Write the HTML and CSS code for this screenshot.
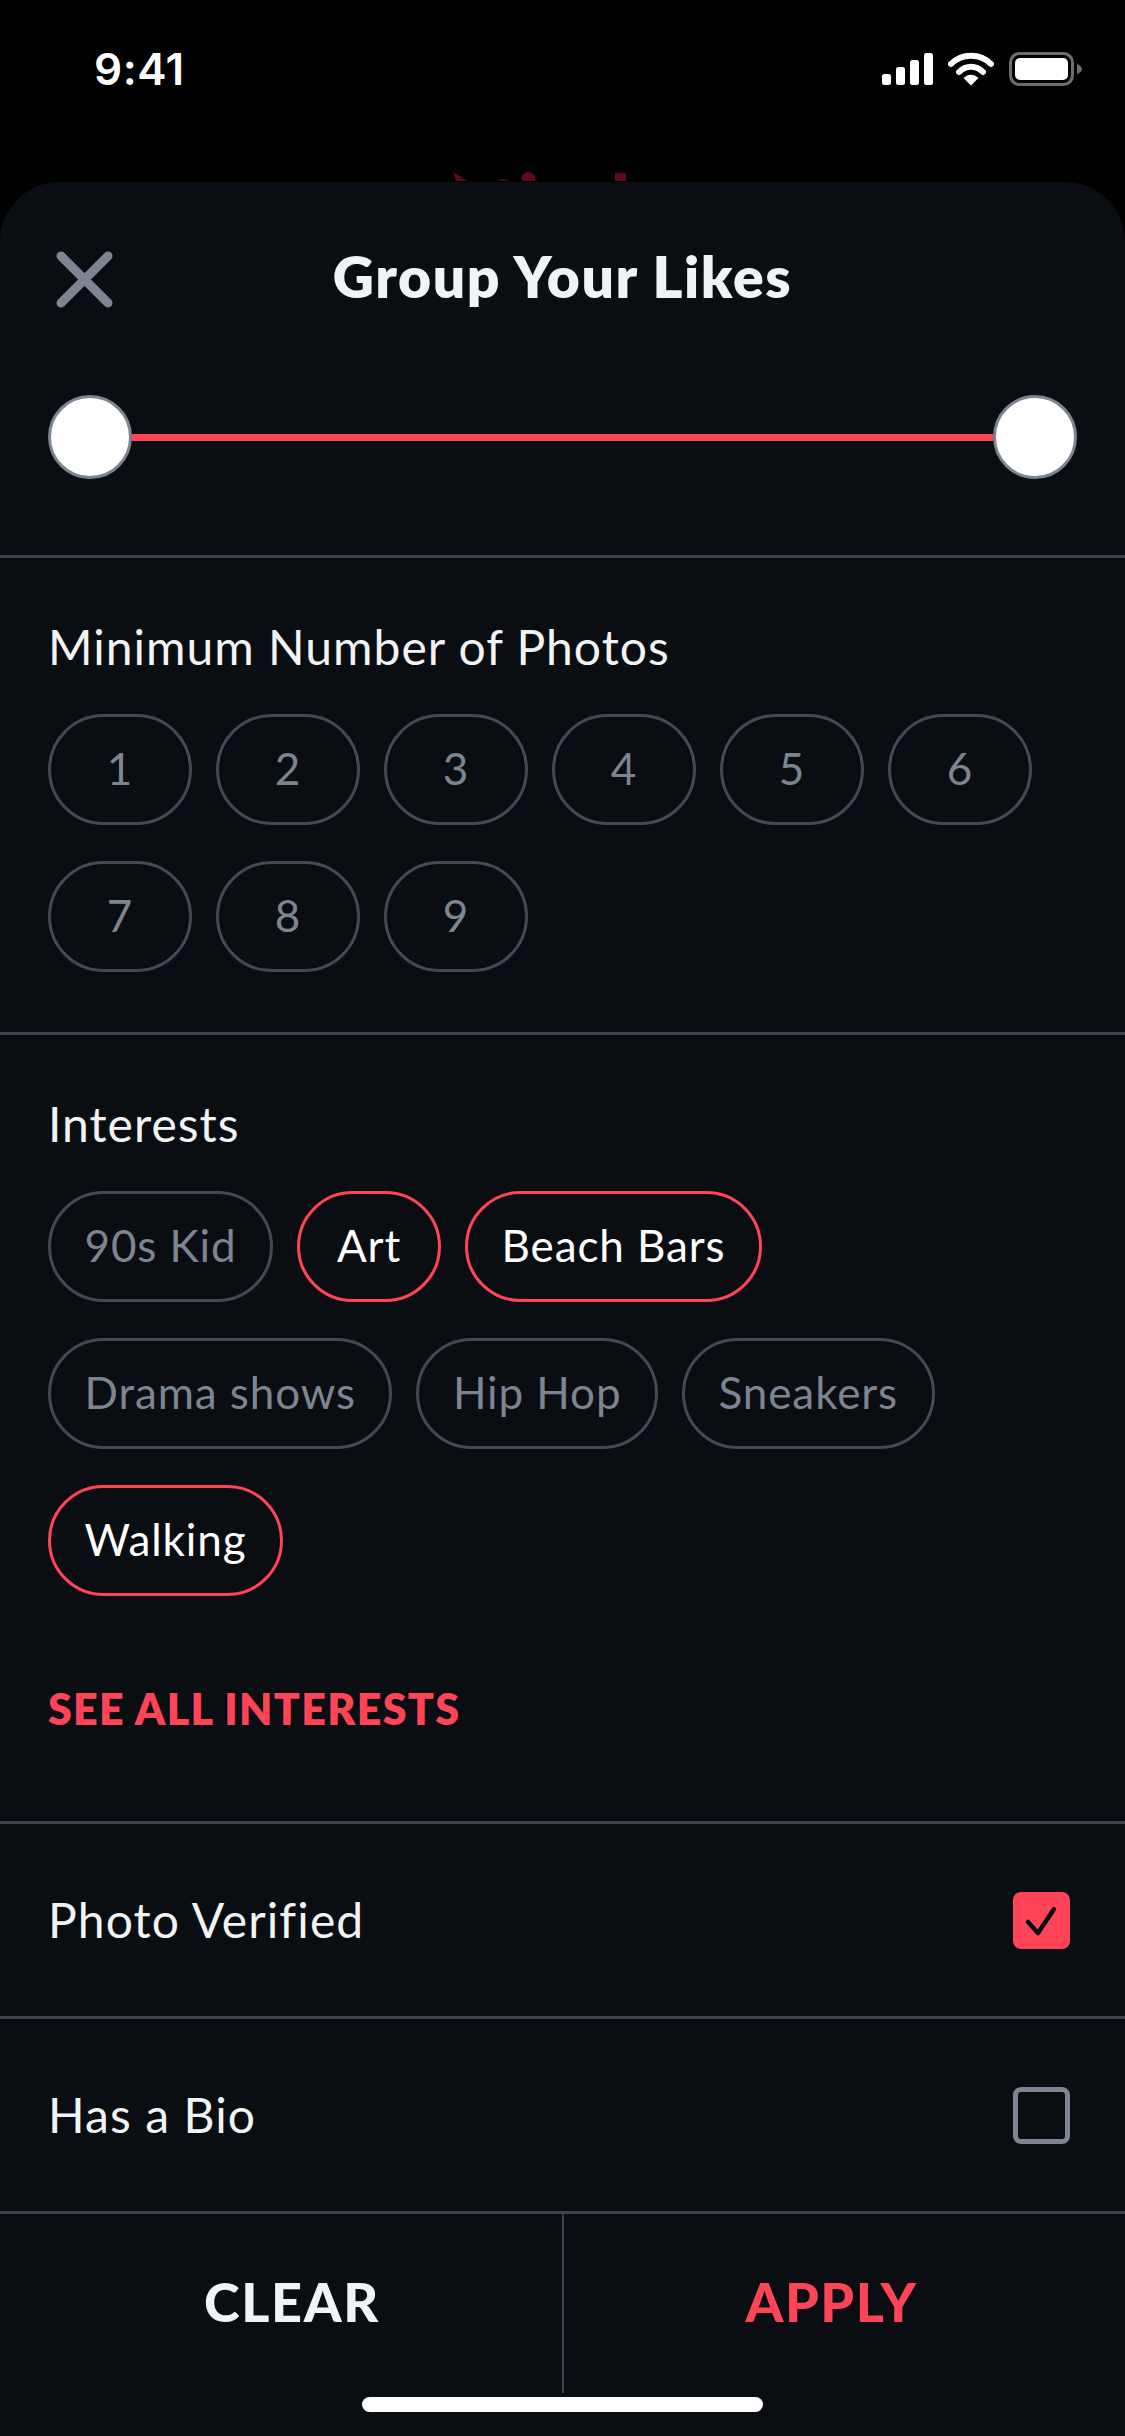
FILE: index.html
```html
<!DOCTYPE html>
<html lang="en">
<head>
    <meta charset="UTF-8">
    <title>Group Your Likes</title>
    <link rel="stylesheet" href="styles.css">
</head>
<body>
    <div class="status">
        <span class="time">9:41</span>
        <div class="status-icons">
            <svg class="signal" width="51" height="32" viewBox="0 0 51 32" fill="#fff">
                <rect x="0" y="21" width="9" height="11" rx="2.5"/>
                <rect x="14" y="14" width="9" height="18" rx="2.5"/>
                <rect x="28" y="7" width="9" height="25" rx="2.5"/>
                <rect x="42" y="0" width="9" height="32" rx="2.5"/>
            </svg>
            <svg class="wifi" width="46" height="34" viewBox="0 0 46 34">
                <path d="M3 12 C14 1 32 1 43 12" fill="none" stroke="#fff" stroke-width="6" stroke-linecap="round"/>
                <path d="M11 20 C18 13 28 13 35 20" fill="none" stroke="#fff" stroke-width="6" stroke-linecap="round"/>
                <path d="M15.500 26 C20 21.500 26 21.500 30.500 26 L23 33.500 Z" fill="#fff"/>
            </svg>
            <svg class="battery" width="73" height="34" viewBox="0 0 73 34">
                <rect x="1.500" y="1.500" width="62" height="31" rx="9" fill="none" stroke="#6e6e6e" stroke-width="3"/>
                <rect x="6" y="6" width="53" height="22" rx="5" fill="#fff"/>
                <path d="M68 12 C71 13 73 15 73 17 C73 19 71 21 68 22 Z" fill="#6e6e6e"/>
            </svg>
        </div>
        <svg class="peek" width="180" height="10" viewBox="0 0 180 10" fill="#5c0a1a">
            <path d="M0 0 L14 9 L3 9 Z"/>
            <path d="M45 9 C47 7 53 7 56 9 Z"/>
            <path d="M69 9 C67 3 72 0 75 0 C79 0 84 3 82 9 Z"/>
            <rect x="162" y="1" width="11" height="8"/>
        </svg>
    </div>

    <div class="sheet">
        <div class="head">
            <svg class="close" width="65" height="65" viewBox="0 0 65 65">
                <path d="M9 9 L56 56 M56 9 L9 56" stroke="#7c8591" stroke-width="9" stroke-linecap="round"/>
            </svg>
            <h1>Group Your Likes</h1>
        </div>

        <div class="slider">
            <span class="knob"></span>
            <span class="track"></span>
            <span class="knob"></span>
        </div>

        <div class="section">
            <p class="label">Minimum Number of Photos</p>
            <div class="chips">
                <span class="chip num">1</span>
                <span class="chip num">2</span>
                <span class="chip num">3</span>
                <span class="chip num">4</span>
                <span class="chip num">5</span>
                <span class="chip num">6</span>
                <span class="chip num">7</span>
                <span class="chip num">8</span>
                <span class="chip num">9</span>
            </div>
        </div>

        <div class="section interests">
            <p class="label">Interests</p>
            <div class="chips">
                <span class="chip">90s Kid</span>
                <span class="chip on">Art</span>
                <span class="chip on">Beach Bars</span>
                <span class="chip">Drama shows</span>
                <span class="chip">Hip Hop</span>
                <span class="chip">Sneakers</span>
                <span class="chip on">Walking</span>
            </div>
            <div class="see-all">SEE ALL INTERESTS</div>
        </div>

        <div class="row">
            <span class="row-label">Photo Verified</span>
            <span class="check checked">
                <svg width="57" height="57" viewBox="0 0 57 57">
                    <path d="M15 30 L25 41 L41 17" fill="none" stroke="#0a0d12" stroke-width="4.5" stroke-linecap="round" stroke-linejoin="round"/>
                </svg>
            </span>
        </div>
        <div class="row">
            <span class="row-label">Has a Bio</span>
            <span class="check"></span>
        </div>

        <div class="footer">
            <button type="button" class="clear">CLEAR</button>
            <button type="button" class="apply">APPLY</button>
        </div>
        <div class="home-bar"></div>
    </div>
</body>
</html>
```

FILE: styles.css
```css
* {
    box-sizing: border-box;
}

body {
    background-color: #000;
    color: #fff;
    font-family: 'Lato', 'Liberation Sans', sans-serif;
    margin: 0;
    width: 1125px;
    height: 2436px;
    overflow: hidden;
}

.status {
    position: relative;
    height: 182px;
    display: flex;
    justify-content: space-between;
    align-items: flex-start;
    padding: 41px 43px 0 94px;
}

.time {
    font-family: 'Inter', sans-serif;
    font-size: 44px;
    font-weight: 600;
    letter-spacing: 0.5px;
    line-height: 56px;
}

.status-icons {
    display: flex;
    align-items: center;
    gap: 15px;
    padding-top: 11px;
}

.peek {
    position: absolute;
    left: 453px;
    top: 172px;
}

.sheet {
    background: #0a0d12;
    border-radius: 60px 60px 0 0;
    height: 2254px;
}

.head {
    position: relative;
    height: 194px;
    display: flex;
    align-items: center;
    justify-content: center;
    padding-bottom: 6px;
}

.close {
    position: absolute;
    left: 52px;
    top: 65px;
}

h1 {
    margin: 0;
    font-size: 57px;
    font-weight: 800;
    letter-spacing: 1.6px;
    color: #f2f3f5;
}

.slider {
    display: flex;
    align-items: center;
    padding: 19px 48px 76px 48px;
    border-bottom: 3px solid #3c4450;
}

.knob {
    width: 84px;
    height: 84px;
    border-radius: 50%;
    background: #fff;
    border: 3px solid #7c8591;
}

.track {
    flex: 1;
    height: 7px;
    background: #ff4458;
}

.section {
    padding: 60px 48px 60px;
    border-bottom: 3px solid #3c4450;
}

.interests {
    padding-bottom: 82px;
}

.label {
    margin: 0 0 36px;
    padding-bottom: 2px;
    height: 60px;
    font-size: 48px;
    line-height: 58px;
    letter-spacing: 1px;
    color: #f2f3f5;
}

.chips {
    display: flex;
    flex-wrap: wrap;
    gap: 36px 24px;
}

.chip {
    min-width: 144px;
    height: 111px;
    display: flex;
    align-items: center;
    justify-content: center;
    padding: 0 33.5px 3px;
    border: 3px solid #424a55;
    border-radius: 56px;
    font-size: 44px;
    letter-spacing: 0.9px;
    color: #7c8591;
}

.chip.on {
    border-color: #ff4458;
    color: #fff;
}

.see-all {
    margin-top: 83px;
    line-height: 60px;
    font-size: 43px;
    font-weight: 800;
    letter-spacing: 1.3px;
    color: #ff4458;
}

.row {
    height: 195px;
    display: flex;
    align-items: center;
    justify-content: space-between;
    padding: 0 55px 0 48px;
    border-bottom: 3px solid #3c4450;
    font-size: 48px;
    letter-spacing: 1.1px;
    color: #f2f3f5;
}

.row-label {
    padding-bottom: 2px;
}

.check {
    width: 57px;
    height: 57px;
    border: 5px solid #7c8591;
    border-radius: 8px;
    display: flex;
    align-items: center;
    justify-content: center;
}

.check.checked {
    background: #ff4458;
    border: 0;
}

.footer {
    height: 179px;
    display: flex;
}

.footer button {
    padding-top: 0;
    padding-bottom: 4px;
    border: 0;
    background: none;
    font-family: inherit;
    font-size: 54px;
    font-weight: 900;
    letter-spacing: 1.6px;
}

.footer .clear {
    width: 564px;
    color: #f2f3f5;
    padding-left: 22px;
    padding-right: 0;
    border-right: 2px solid #3c4450;
}

.footer .apply {
    flex: 1;
    color: #ff4458;
    padding-left: 0;
    padding-right: 26px;
}

.home-bar {
    width: 401px;
    height: 15px;
    margin: 4px auto 0;
    border-radius: 8px;
    background: #fff;
}
```
